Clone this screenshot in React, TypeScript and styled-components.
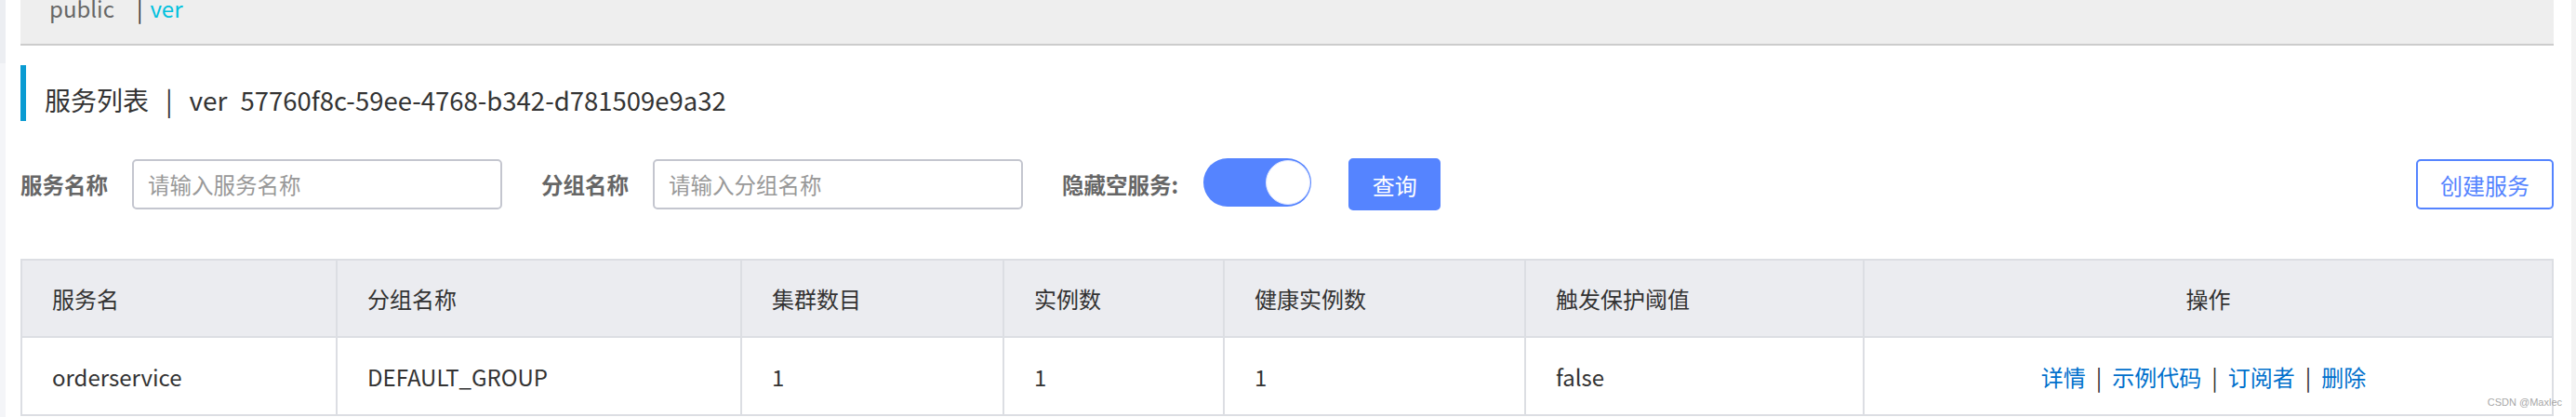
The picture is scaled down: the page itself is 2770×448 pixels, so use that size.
import React from "react";
import styled, { createGlobalStyle } from "styled-components";

const BLUE = "#5584ff";
const FONT = `"Noto Sans CJK SC", "Liberation Sans", sans-serif`;

const GlobalStyle = createGlobalStyle`
  html, body {
    margin: 0;
    padding: 0;
    background: #fff;
  }
  body {
    font-family: ${FONT};
    color: #333;
  }
  * {
    box-sizing: border-box;
  }
`;

const Page = styled.div`
  position: relative;
  display: flex;
  width: 2770px;
  height: 448px;
  overflow: hidden;
`;

const SideEdge = styled.div`
  flex: none;
  width: 6px;
  background: linear-gradient(#eceef2 0 68px, #f4f5f8 68px);
`;

const ScrollEdge = styled.div`
  flex: none;
  width: 5px;
  background: #f3f3f3;
`;

const Main = styled.div`
  flex: 1;
  min-width: 0;
  display: flex;
  flex-direction: column;
  padding: 0 19px 0 16px;
`;

const Crumbs = styled.div`
  height: 49px;
  background: #eee;
  border-bottom: 2px solid #ccc;
  padding-left: 31px;
  display: flex;
  align-items: flex-start;
  font-size: 24px;
  line-height: 24px;
`;

const CrumbText = styled.span<{ $active?: boolean }>`
  margin-top: -3px;
  color: ${(p) => (p.$active ? "#00c1de" : "#666")};
`;

const CrumbSep = styled.span`
  margin: -3px 8px 0 24px;
  color: #333;
`;

const Title = styled.div`
  margin-top: 21px;
  height: 60px;
  border-left: 6px solid #0a9bd2;
  padding: 23px 0 0 20px;
  font-size: 28px;
  line-height: 28px;
  color: #333;
  white-space: nowrap;
`;

const TitleSep = styled.span`
  margin: 0 18px;
`;

const TitleId = styled.span`
  margin-left: 14px;
  font-size: 27.5px;
`;

const Filters = styled.div`
  margin-top: 40px;
  height: 56px;
  display: flex;
  align-items: center;
`;

const Label = styled.label`
  margin-right: 26px;
  font-size: 23.5px;
  font-weight: bold;
  color: #666;
  white-space: nowrap;
`;

const Input = styled.input`
  width: 398px;
  height: 54px;
  margin-right: 42px;
  border: 2px solid #c4c6cf;
  border-radius: 5px;
  padding: 0 15px;
  font-family: ${FONT};
  font-size: 23.5px;
  color: #333;
  outline: none;
  &::placeholder {
    color: #999;
  }
`;

const Switch = styled.div<{ $on: boolean }>`
  flex: none;
  width: 116px;
  height: 52px;
  margin: 0 40px 4px 1px;
  padding: 0 1px;
  border-radius: 26px;
  background: ${(p) => (p.$on ? BLUE : "#c4c6cf")};
  display: flex;
  align-items: center;
  justify-content: ${(p) => (p.$on ? "flex-end" : "flex-start")};
`;

const Knob = styled.span`
  width: 48px;
  height: 48px;
  border-radius: 50%;
  background: #fff;
  border: 1px solid #dde5ff;
`;

const Button = styled.button<{ $primary?: boolean }>`
  flex: none;
  height: ${(p) => (p.$primary ? "56px" : "54px")};
  padding: 0;
  border-radius: 5px;
  border: 2px solid ${BLUE};
  background: ${(p) => (p.$primary ? BLUE : "#fff")};
  color: ${(p) => (p.$primary ? "#fff" : BLUE)};
  font-family: ${FONT};
  font-size: 24px;
  cursor: pointer;
`;

const QueryButton = styled(Button)`
  width: 99px;
`;

const CreateButton = styled(Button)`
  width: 148px;
  margin-left: auto;
`;

const Table = styled.table`
  margin-top: 52px;
  width: 100%;
  table-layout: fixed;
  border-collapse: collapse;
  font-size: 24px;
  color: #333;
`;

const Th = styled.th<{ $center?: boolean }>`
  height: 83px;
  padding: ${(p) => (p.$center ? "0" : "0 0 0 32px")};
  background: #ebecf0;
  border: 2px solid #dcdee3;
  font-weight: normal;
  text-align: ${(p) => (p.$center ? "center" : "left")};
`;

const Td = styled.td<{ $center?: boolean }>`
  height: 84px;
  padding: ${(p) => (p.$center ? "0 10px 0 0" : "0 0 0 32px")};
  border: 2px solid #dcdee3;
  text-align: ${(p) => (p.$center ? "center" : "left")};
  white-space: nowrap;
`;

const Link = styled.a`
  color: #0070cc;
  text-decoration: none;
  cursor: pointer;
`;

const LinkSep = styled.span`
  margin: 0 11px;
  color: #333;
`;

const Watermark = styled.div`
  position: absolute;
  right: 15px;
  top: 426px;
  font-family: "Liberation Sans", sans-serif;
  font-size: 11px;
  color: #a8a8a8;
  pointer-events: none;
`;

const columns = [
  { title: "服务名", width: 339 },
  { title: "分组名称", width: 435 },
  { title: "集群数目", width: 282 },
  { title: "实例数", width: 237 },
  { title: "健康实例数", width: 324 },
  { title: "触发保护阈值", width: 364 },
  { title: "操作", width: 741, center: true },
];

const rows = [
  {
    name: "orderservice",
    group: "DEFAULT_GROUP",
    clusters: 1,
    instances: 1,
    healthy: 1,
    threshold: "false",
  },
];

const actions = ["详情", "示例代码", "订阅者", "删除"];

const App = () => {
  return (
    <Page>
      <GlobalStyle />
      <SideEdge />
      <Main>
        <Crumbs>
          <CrumbText>public</CrumbText>
          <CrumbSep>|</CrumbSep>
          <CrumbText $active>ver</CrumbText>
        </Crumbs>

        <Title>
          服务列表
          <TitleSep>|</TitleSep>
          ver
          <TitleId>57760f8c-59ee-4768-b342-d781509e9a32</TitleId>
        </Title>

        <Filters>
          <Label>服务名称</Label>
          <Input placeholder="请输入服务名称" />
          <Label>分组名称</Label>
          <Input placeholder="请输入分组名称" />
          <Label>隐藏空服务:</Label>
          <Switch $on>
            <Knob />
          </Switch>
          <QueryButton $primary>查询</QueryButton>
          <CreateButton>创建服务</CreateButton>
        </Filters>

        <Table>
          <colgroup>
            {columns.map((c) => (
              <col key={c.title} style={{ width: c.width }} />
            ))}
          </colgroup>
          <thead>
            <tr>
              {columns.map((c) => (
                <Th key={c.title} $center={c.center}>
                  {c.title}
                </Th>
              ))}
            </tr>
          </thead>
          <tbody>
            {rows.map((r) => (
              <tr key={r.name}>
                <Td>{r.name}</Td>
                <Td>{r.group}</Td>
                <Td>{r.clusters}</Td>
                <Td>{r.instances}</Td>
                <Td>{r.healthy}</Td>
                <Td>{r.threshold}</Td>
                <Td $center>
                  {actions.map((a, i) => (
                    <React.Fragment key={a}>
                      {i > 0 && <LinkSep>|</LinkSep>}
                      <Link>{a}</Link>
                    </React.Fragment>
                  ))}
                </Td>
              </tr>
            ))}
          </tbody>
        </Table>
      </Main>
      <ScrollEdge />
      <Watermark>CSDN @Maxlec</Watermark>
    </Page>
  );
};

export default App;
